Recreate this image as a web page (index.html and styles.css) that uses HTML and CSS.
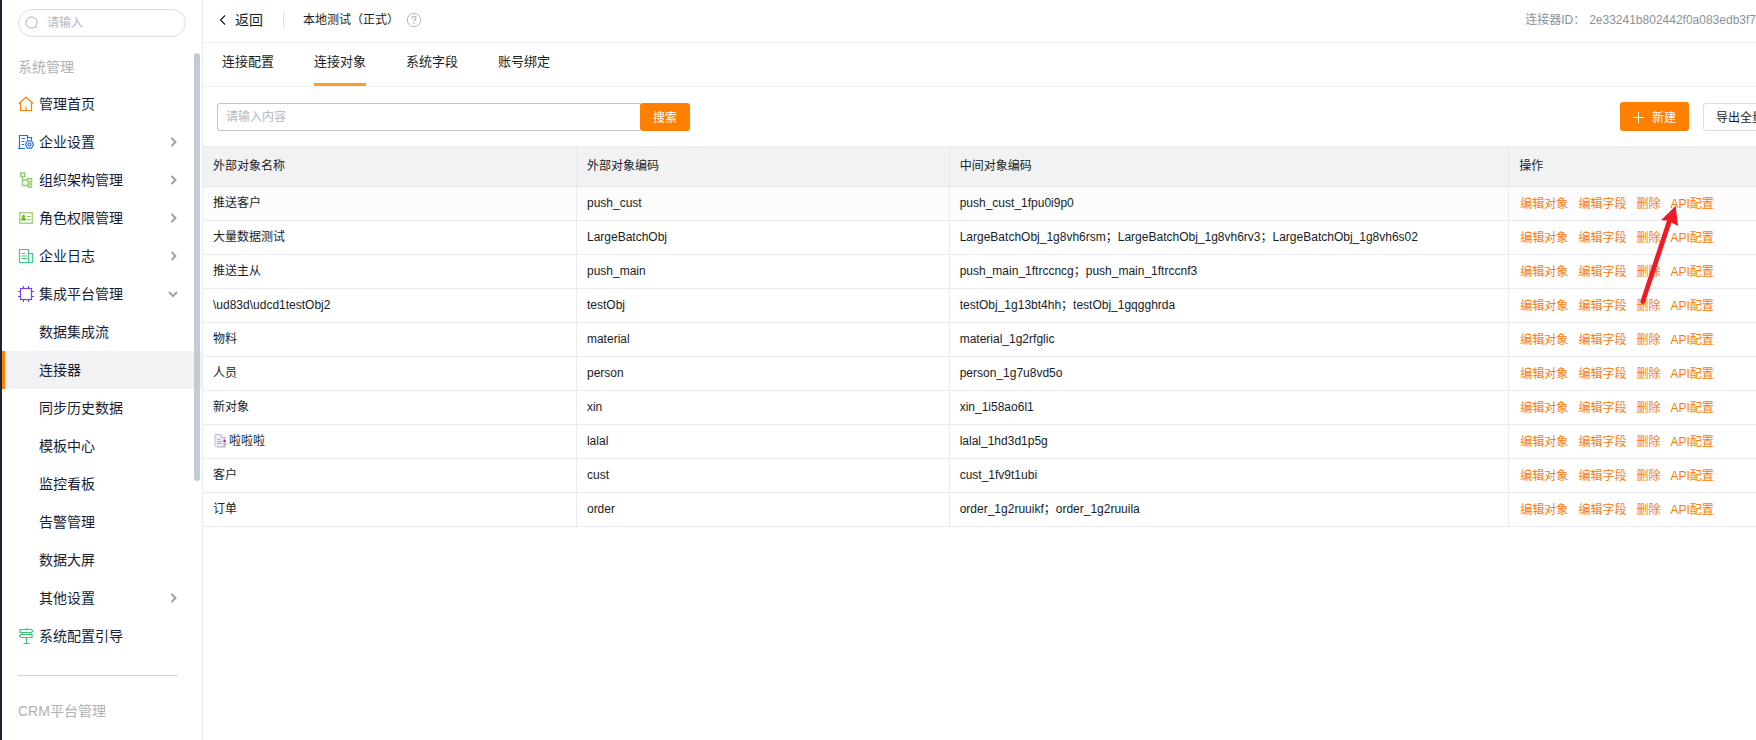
FILE: index.html
```html
<!DOCTYPE html>
<html lang="zh-CN">
    <head>
        <meta charset="utf-8">
        <title>连接器</title>
<link rel="stylesheet" href="styles.css">
    </head>
    <body>
        <svg class="defs" aria-hidden="true">
            <symbol id="right" viewBox="0 0 8 12"><path d="M1.500 2l4 4-4 4" fill="none" stroke="#9da1b0" stroke-width="2"/></symbol>
            <symbol id="down" viewBox="0 0 10 12"><path d="M1 4l4 4 4-4" fill="none" stroke="#9da1b0" stroke-width="2"/></symbol>
        </svg>

        <aside class="sidebar">
            <label class="side-search">
                <svg width="14" height="14" viewBox="0 0 14 14" fill="none" stroke="#a9adb8"><circle cx="6.500" cy="6.500" r="5.500"/><path d="M10.500 10.500l2 2"/></svg>
                <input type="text" placeholder="请输入" aria-label="请输入">
            </label>
            <h2 class="side-title">系统管理</h2>
            <nav class="menu">
                <a href="#"><svg class="icon" viewBox="0 0 16 16" fill="none" stroke="#ff7f0e" stroke-width="1.200"><path d="M2.500 6v8.500h11V6M.8 7.500L8 1.200l7.200 6.300M8 10.500v4"/></svg><span>管理首页</span></a>
                <a href="#"><svg class="icon" viewBox="0 0 16 16" fill="none" stroke="#1f6bf5" stroke-width="1.200"><path d="M7 14.500H1.500v-13h8v4M9.500 3.500h4v2.500M0 14.500h7M3.500 4.500h3.500M3.500 7.500h3M3.500 10.500h2.500"/><path d="M9.500 6.800h4l2 3.700-2 3.700h-4l-2-3.700z"/><circle cx="11.500" cy="10.500" r="1.500"/></svg><span>企业设置</span><svg class="arrow"><use href="#right"/></svg></a>
                <a href="#"><svg class="icon" viewBox="0 0 16 16" fill="none" stroke="#93cf70" stroke-width="1.500"><path d="M2.800 1h4v3.500h-4zM4.500 4.500v9h5.500M4.500 8h5.500M10 6.500h3.500V10H10zM10 12h3.500v3H10z"/></svg><span>组织架构管理</span><svg class="arrow"><use href="#right"/></svg></a>
                <a href="#"><svg class="icon" viewBox="0 0 16 16"><rect x="1.700" y="2.700" width="12.600" height="10.600" fill="none" stroke="#a5d67c" stroke-width="1.500"/><circle cx="5.500" cy="6.300" r="1.500" fill="#64b90f"/><path d="M3 10.500c0-4 5-4 5 0z" fill="#64b90f"/><path d="M9 6.500h3.500M9 9.500h3.500" stroke="#87c95a"/></svg><span>角色权限管理</span><svg class="arrow"><use href="#right"/></svg></a>
                <a href="#"><svg class="icon" viewBox="0 0 16 16" fill="none" stroke="#41c980" stroke-width="1.200"><path d="M1.500 1.500h9v13h-9zM10.500 5.500h4v9h-5M3.500 5.500h3.500M3.500 8h5.500M3.500 10.500h5.500"/></svg><span>企业日志</span><svg class="arrow"><use href="#right"/></svg></a>
                <a href="#"><svg class="icon" viewBox="0 0 16 16" fill="none" stroke="#7b3df0" stroke-width="1.200"><rect x="2.500" y="2.500" width="11" height="11"/><path d="M5.500 0v2.500M10.500 0v2.500M5.500 13.500V16M10.500 13.500V16M0 5.500h2.500M0 10.500h2.500M13.500 5.500H16M13.500 10.500H16"/></svg><span>集成平台管理</span><svg class="arrow down"><use href="#down"/></svg></a>
                <a href="#" class="sub">数据集成流</a>
                <a href="#" class="sub active">连接器</a>
                <a href="#" class="sub">同步历史数据</a>
                <a href="#" class="sub">模板中心</a>
                <a href="#" class="sub">监控看板</a>
                <a href="#" class="sub">告警管理</a>
                <a href="#" class="sub">数据大屏</a>
                <a href="#" class="sub"><span>其他设置</span><svg class="arrow"><use href="#right"/></svg></a>
                <a href="#"><svg class="icon" viewBox="0 0 16 16" fill="none" stroke="#38c878" stroke-width="1.200"><path d="M2 1.500h11.500L15 3l-1.500 1.500H2zM14 6.500H3L1.500 8 3 9.500h11zM4.500 4.500v2M12 4.500v2M8.500 0v1.500M8.500 9.500v6M5.500 15.500h6"/></svg><span>系统配置引导</span></a>
            </nav>
            <hr class="line">
            <h2 class="side-title crm">CRM平台管理</h2>
            <div class="scrollbar"></div>
        </aside>

        <main class="main">
            <header class="header">
                <a href="#" class="back"><svg width="8" height="12" viewBox="0 0 8 12" fill="none" stroke="#181c25" stroke-width="1.200"><path d="M6 1.500L1.500 6 6 10.500"/></svg>返回</a>
                <h1 class="name">本地测试（正式）</h1>
                <svg class="help" viewBox="0 0 16 16" fill="none" stroke="#b5b9c6"><circle cx="8" cy="8" r="6.700"/><path d="M6 6.500c0-3 4.200-2.600 4 0-.1 1.200-2 1.300-2 3M8 10.800v1.200" stroke-width="1.300"/></svg>
                <div class="conn-id"><span>连接器ID：</span><span>2e33241b802442f0a083edb3f7</span></div>
            </header>
            <nav class="tabs">
                <a href="#">连接配置</a>
                <a href="#" class="on">连接对象</a>
                <a href="#">系统字段</a>
                <a href="#">账号绑定</a>
            </nav>
            <div class="toolbar">
                <form class="search">
                    <input type="text" placeholder="请输入内容" aria-label="请输入内容">
                    <button type="button">搜索</button>
                </form>
                <div class="btns">
                    <button type="button" class="new"><svg width="12" height="12" viewBox="0 0 12 12" stroke="#fff"><path d="M1 6.500h11M6.500 1v11"/></svg>新建</button>
                    <button type="button" class="export">导出全量</button>
                </div>
            </div>
            <table class="list">
                <thead>
                    <tr><th class="c1">外部对象名称</th><th class="c2">外部对象编码</th><th class="c3">中间对象编码</th><th>操作</th></tr>
                </thead>
                <tbody>
                    <tr class="hover"><td>推送客户</td><td>push_cust</td><td>push_cust_1fpu0i9p0</td><td><div class="ops"><a href="#">编辑对象</a><a href="#">编辑字段</a><a href="#">删除</a><a href="#" class="api">API配置<svg class="pointer" width="40" height="104" viewBox="0 0 40 104"><path d="M35.700 2.700L38 23 31.500 19.500 5 99.500C4 102 0 101 .5 98L27 17.500 21 17.300z" fill="#ed1c24"/></svg></a></div></td></tr>
                    <tr><td>大量数据测试</td><td>LargeBatchObj</td><td>LargeBatchObj_1g8vh6rsm；LargeBatchObj_1g8vh6rv3；LargeBatchObj_1g8vh6s02</td><td><div class="ops"><a href="#">编辑对象</a><a href="#">编辑字段</a><a href="#">删除</a><a href="#">API配置</a></div></td></tr>
                    <tr><td>推送主从</td><td>push_main</td><td>push_main_1ftrccncg；push_main_1ftrccnf3</td><td><div class="ops"><a href="#">编辑对象</a><a href="#">编辑字段</a><a href="#">删除</a><a href="#">API配置</a></div></td></tr>
                    <tr><td>\ud83d\udcd1testObj2</td><td>testObj</td><td>testObj_1g13bt4hh；testObj_1gqgghrda</td><td><div class="ops"><a href="#">编辑对象</a><a href="#">编辑字段</a><a href="#">删除</a><a href="#">API配置</a></div></td></tr>
                    <tr><td>物料</td><td>material</td><td>material_1g2rfglic</td><td><div class="ops"><a href="#">编辑对象</a><a href="#">编辑字段</a><a href="#">删除</a><a href="#">API配置</a></div></td></tr>
                    <tr><td>人员</td><td>person</td><td>person_1g7u8vd5o</td><td><div class="ops"><a href="#">编辑对象</a><a href="#">编辑字段</a><a href="#">删除</a><a href="#">API配置</a></div></td></tr>
                    <tr><td>新对象</td><td>xin</td><td>xin_1i58ao6l1</td><td><div class="ops"><a href="#">编辑对象</a><a href="#">编辑字段</a><a href="#">删除</a><a href="#">API配置</a></div></td></tr>
                    <tr><td><div class="doc"><svg width="16" height="14" viewBox="0 0 16 14"><path d="M4 3h8.500v10.500H4z" fill="#b9aecb"/><path d="M2 .5h6l3 3v9H2z" fill="#f1ecf6" stroke="#c6bdd2"/><path d="M8 .5v3h3" fill="#fff" stroke="#c6bdd2"/><path d="M4 5.500h3M4 7.500h5M4 9.500h5" stroke="#b5a9c6"/><path d="M10.500 6h2v2h-2z" fill="#e3138b"/><path d="M12 9h1.500v2H12z" fill="#f5b83d"/></svg>啦啦啦</div></td><td>lalal</td><td>lalal_1hd3d1p5g</td><td><div class="ops"><a href="#">编辑对象</a><a href="#">编辑字段</a><a href="#">删除</a><a href="#">API配置</a></div></td></tr>
                    <tr><td>客户</td><td>cust</td><td>cust_1fv9t1ubi</td><td><div class="ops"><a href="#">编辑对象</a><a href="#">编辑字段</a><a href="#">删除</a><a href="#">API配置</a></div></td></tr>
                    <tr><td>订单</td><td>order</td><td>order_1g2ruuikf；order_1g2ruuila</td><td><div class="ops"><a href="#">编辑对象</a><a href="#">编辑字段</a><a href="#">删除</a><a href="#">API配置</a></div></td></tr>
                </tbody>
            </table>
        </main>
    </body>
</html>
```

FILE: styles.css
```css
* {
  box-sizing: border-box;
}

body {
  margin: 0;
  height: 100vh;
  display: flex;
  overflow: hidden;
  background: #fff;
  color: #181c25;
  font-family: "Liberation Sans", "Noto Sans CJK SC", sans-serif;
  font-size: 12px;
  line-height: 18px;
}

a {
  color: inherit;
  text-decoration: none;
}

h1, h2 {
  margin: 0;
  font-weight: normal;
}

input, button {
  font-family: inherit;
  font-size: 12px;
}

.defs {
  position: absolute;
  width: 0;
  height: 0;
}

/* left menu */
.sidebar {
  position: relative;
  flex: 0 0 203px;
  border-left: 2px solid #1c2233;
  border-right: 1px solid #e9eaf2;
  padding-top: 9px;
  overflow: hidden;
}

.side-search {
  display: flex;
  align-items: center;
  gap: 8px;
  height: 28px;
  margin: 0 16px;
  padding-left: 6px;
  border: 1px solid #dcdee8;
  border-radius: 14px;
}

.side-search input {
  width: 120px;
  border: 0;
  padding: 0;
  outline: none;
  background: none;
}

input::placeholder {
  color: #b4b8c2;
  opacity: 1;
}

.side-title {
  margin: 20px 16px 8px;
  font-size: 14px;
  line-height: 20px;
  color: #b1b1b1;
}

.menu a {
  display: flex;
  align-items: center;
  height: 38px;
  padding: 0 24px 0 16px;
  font-size: 14px;
  color: #181c35;
}

.menu .sub {
  padding-left: 37px;
}

.menu .active {
  background: #f0f2f4;
  border-left: 3px solid #ff8000;
  padding-left: 34px;
}

.icon {
  width: 16px;
  height: 16px;
  margin-right: 5px;
}

.arrow {
  width: 8px;
  height: 12px;
  margin-left: auto;
}

.arrow.down {
  width: 10px;
}

.line {
  margin: 20px 24px 0 16px;
  border: 0;
  border-top: 1px solid #d5d5d5;
}

.crm {
  margin-top: 25px;
}

.scrollbar {
  position: absolute;
  top: 53px;
  right: 2px;
  width: 6px;
  height: 428px;
  border-radius: 3px;
  background: #c3ccd6;
}

/* right part */
.main {
  flex: 1;
  min-width: 0;
  overflow: hidden;
}

.header {
  display: flex;
  align-items: center;
  height: 43px;
  padding-bottom: 3px;
  padding-left: 16px;
  border-bottom: 1px solid #f0f1f3;
  white-space: nowrap;
}

.back {
  display: flex;
  align-items: center;
  gap: 8px;
  font-size: 14px;
}

.name {
  margin-left: 20px;
  padding-left: 19px;
  border-left: 1px solid #dedfe4;
  font-size: 12px;
  line-height: 14px;
}

.help {
  width: 16px;
  height: 16px;
  margin-left: 7px;
}

.conn-id {
  display: flex;
  gap: 4px;
  margin-left: auto;
  color: #8d9199;
}

.tabs {
  display: flex;
  gap: 40px;
  height: 44px;
  padding-left: 19px;
  border-bottom: 1px solid #f0f1f3;
}

.tabs a {
  height: 43px;
  padding-top: 10px;
  font-size: 13px;
}

.tabs .on {
  border-bottom: 3px solid #ff9b29;
}

.toolbar {
  display: flex;
  align-items: center;
  justify-content: space-between;
  height: 59px;
  padding-left: 14px;
}

.search {
  display: flex;
}

.search input {
  width: 423px;
  height: 28px;
  padding: 0 8px;
  border: 1px solid #c1c5ce;
  border-right: 0;
  border-radius: 3px 0 0 3px;
  outline: none;
}

.search button {
  width: 50px;
  height: 28px;
  padding: 0;
  border: 0;
  border-radius: 3px;
  background: #ff8000;
  color: #fff;
}

/* the last button runs off the right edge */
.btns {
  display: flex;
  align-items: center;
  gap: 14px;
  margin-right: -21px;
}

.new {
  display: flex;
  align-items: center;
  gap: 8px;
  height: 29px;
  padding: 0 13px 0 12px;
  border: 0;
  border-radius: 3px;
  background: #ff8000;
  color: #fff;
}

.export {
  height: 28px;
  padding: 0 12px;
  border: 1px solid #dcdee8;
  border-radius: 3px;
  background: #fff;
  color: #181c25;
  white-space: nowrap;
}

.list {
  width: 100%;
  table-layout: fixed;
  border-collapse: separate;
  border-spacing: 0;
  border-top: 1px solid #e9eaf2;
}

.list th {
  height: 40px;
  padding: 0 10px 1px;
  background: #f0f2f4;
  border-right: 1px solid #e6e8ef;
  border-bottom: 1px solid #e6e8ef;
  font-weight: normal;
  text-align: left;
}

.list td {
  height: 34px;
  padding: 0 10px 2px;
  border-right: 1px solid #e9eaf2;
  border-bottom: 1px solid #e9eaf2;
  white-space: nowrap;
}

.list th:last-child, .list td:last-child {
  border-right: 0;
}

.list td:last-child {
  padding-bottom: 0;
}

.c1 {
  width: 24.08%;
}

.c2 {
  width: 24%;
}

.c3 {
  width: 36.04%;
}

.hover td {
  background: #fcfcfd;
}

.ops {
  display: flex;
  gap: 10px;
  padding-left: 1px;
  color: #ff7a0d;
}

.doc {
  display: flex;
  align-items: center;
}

.api {
  position: relative;
}

/* red arrow over the links */
.pointer {
  position: absolute;
  left: -30px;
  top: 8px;
  pointer-events: none;
}
```
